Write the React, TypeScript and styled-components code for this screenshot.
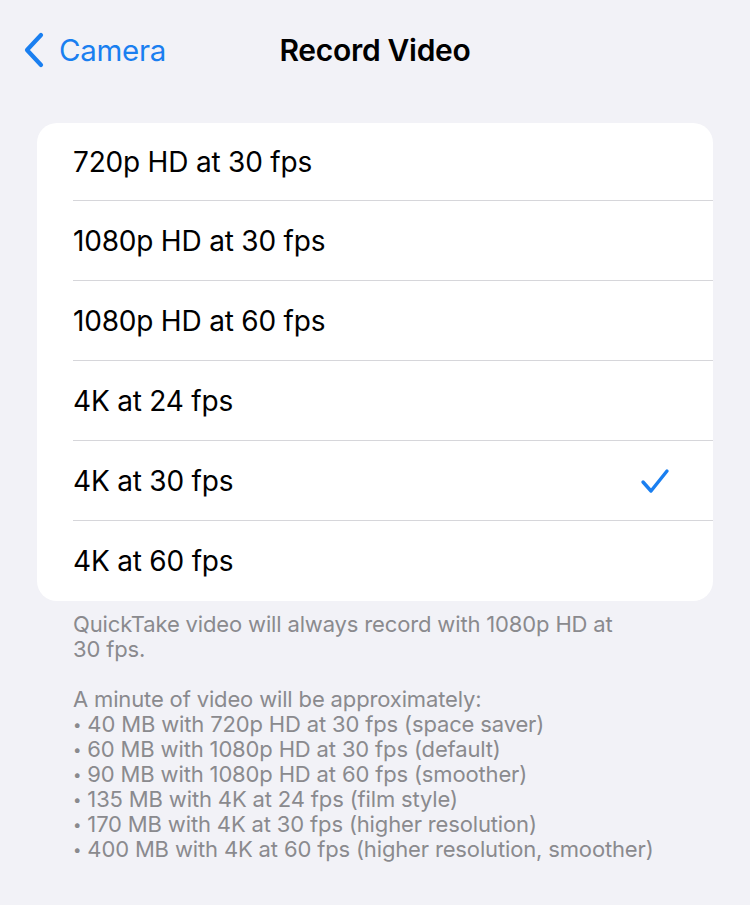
import React from 'react';
import styled, { createGlobalStyle } from 'styled-components';

const GlobalStyle = createGlobalStyle`
  html, body {
    margin: 0;
    padding: 0;
    background: #f2f2f7;
  }
  body {
    font-family: Inter, "Noto Sans", "Liberation Sans", sans-serif;
    -webkit-font-smoothing: antialiased;
  }
`;

const options = [
  '720p HD at 30 fps',
  '1080p HD at 30 fps',
  '1080p HD at 60 fps',
  '4K at 24 fps',
  '4K at 30 fps',
  '4K at 60 fps',
];

const sizes = [
  '40 MB with 720p HD at 30 fps (space saver)',
  '60 MB with 1080p HD at 30 fps (default)',
  '90 MB with 1080p HD at 60 fps (smoother)',
  '135 MB with 4K at 24 fps (film style)',
  '170 MB with 4K at 30 fps (higher resolution)',
  '400 MB with 4K at 60 fps (higher resolution, smoother)',
];

const App: React.FC = () => {
  const selecionado = 4;

  return (
    <>
      <GlobalStyle />
      <Page>
        <NavBar>
          <BackButton>
            <svg width="22" height="36" viewBox="0 0 22 36" fill="none">
              <path d="M18 3 L4 18 L18 33" stroke="#1a7ff0" strokeWidth="4.2" strokeLinecap="round" strokeLinejoin="round" />
            </svg>
            <BackLabel>Camera</BackLabel>
          </BackButton>
          <Title>Record Video</Title>
        </NavBar>

        <Card>
          {options.map((o, i) => (
            <Row key={i} $last={i === options.length - 1}>
              <RowLabel>{o}</RowLabel>
              {i === selecionado && (
                <svg width="30" height="26" viewBox="0 0 30 26" fill="none">
                  <path d="M3 14 L11 23 L27 3" stroke="#1a7ff0" strokeWidth="3.4" strokeLinecap="round" strokeLinejoin="round" />
                </svg>
              )}
            </Row>
          ))}
        </Card>

        <Footer>
          <p>QuickTake video will always record with 1080p HD at<br />30 fps.</p>
          <p>
            A minute of video will be approximately:
            {sizes.map((s, i) => (
              <React.Fragment key={i}>
                <br />
                <Bullet>•</Bullet> {s}
              </React.Fragment>
            ))}
          </p>
        </Footer>
      </Page>
    </>
  );
};

export default App;

// Estilos

const Page = styled.div`
  width: 750px;
  height: 905px;
  background: #f2f2f7;
  overflow: hidden;
`;

const NavBar = styled.div`
  position: relative;
  height: 100px;
  display: flex;
  align-items: center;
  justify-content: center;
`;

const BackButton = styled.div`
  position: absolute;
  left: 23px;
  top: 32px;
  display: flex;
  align-items: center;
  gap: 14px;
`;

const BackLabel = styled.span`
  font-size: 29.5px;
  color: #1a7ff0;
  letter-spacing: -0.3px;
`;

const Title = styled.h1`
  margin: 0;
  font-size: 30px;
  font-weight: 600;
  color: #000;
  letter-spacing: -0.3px;
`;

const Card = styled.div`
  margin: 23px 37px 0;
  background: #fff;
  border-radius: 20px;
  overflow: hidden;
`;

const Row = styled.div<{ $last?: boolean }>`
  height: 80px;
  margin-left: 36px;
  padding-right: 43px;
  display: flex;
  align-items: center;
  justify-content: space-between;
  box-sizing: border-box;
  border-bottom: ${(p) => (p.$last ? 'none' : '1.5px solid #d6d6da')};
  &:first-child {
    height: 78px;
  }
`;

const RowLabel = styled.span`
  font-size: 28px;
  color: #000;
  letter-spacing: -0.2px;
`;

const Footer = styled.div`
  padding: 11px 20px 0 73px;
  font-size: 22px;
  line-height: 25px;
  color: #8a8a8e;
  letter-spacing: -0.15px;

  p {
    margin: 0 0 25px;
  }
`;

const Bullet = styled.span`
  font-size: 15px;
  vertical-align: 2px;
`;
